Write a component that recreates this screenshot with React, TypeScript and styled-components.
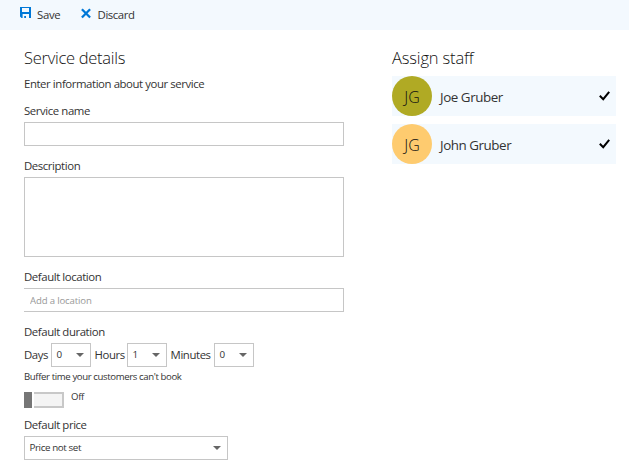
import React from 'react';
import styled, { createGlobalStyle } from 'styled-components';

const GlobalStyle = createGlobalStyle`
  *, *::before, *::after { box-sizing: border-box; }
  body {
    margin: 0;
    background: #fff;
    color: #333;
    font: 400 11.4px/16px "Open Sans", "Noto Sans", sans-serif;
    letter-spacing: -0.42px;
    white-space: nowrap;
    overflow: hidden;
  }
`;

const Page = styled.div`
  width: 629px;
  height: 470px;
`;

const Toolbar = styled.header`
  display: flex;
  height: 30px;
  padding: 7px 0 0 20px;
  background: #f3f9fe;
`;

const Command = styled.button<{ $width: number; $gap: number; $spacing: number }>`
  display: flex;
  gap: ${(p) => p.$gap}px;
  width: ${(p) => p.$width}px;
  height: 16px;
  padding: 0;
  border: 0;
  background: none;
  color: inherit;
  font: inherit;
  letter-spacing: ${(p) => p.$spacing}px;
  svg { flex: none; display: block; }
`;

const Columns = styled.main`
  display: grid;
  grid-template-columns: 320px 224px;
  column-gap: 48px;
  padding: 16px 0 0 24px;
`;

const Column = styled.section`
  display: flex;
  flex-direction: column;
`;

const Heading = styled.h1<{ $spacing: number }>`
  margin: 0;
  font-size: 16.5px;
  font-weight: 300;
  line-height: 24px;
  letter-spacing: ${(p) => p.$spacing}px;
  color: #111;
`;

const Intro = styled.p`
  margin: 6px 0 11px;
`;

const Field = styled.div<{ $after?: number }>`
  display: flex;
  flex-direction: column;
  gap: 3px;
  margin-bottom: ${(p) => p.$after ?? 12}px;
`;

const Label = styled.label`
  height: 16px;
`;

const Input = styled.input<{ $openLeft?: boolean }>`
  width: 320px;
  height: 24px;
  padding: 0 6px;
  border: 1px solid #c6c6c6;
  ${(p) => p.$openLeft && 'border-left: 0;'}
  border-radius: 0;
  outline: 0;
  background: #fff;
  font: 9.6px "Open Sans", "Noto Sans", sans-serif;
  letter-spacing: -0.15px;
  &::placeholder { color: #999; opacity: 1; }
`;

const TextArea = styled.textarea`
  display: block;
  width: 320px;
  height: 80px;
  border: 1px solid #c6c6c6;
  border-radius: 0;
  outline: 0;
  resize: none;
`;

const DurationRow = styled.div`
  display: flex;
  align-items: center;
  height: 24px;
`;

const Unit = styled.span<{ $width: number }>`
  width: ${(p) => p.$width}px;
  height: 17px;
`;

const Select = styled.div<{ $width: number }>`
  display: flex;
  align-items: center;
  justify-content: space-between;
  width: ${(p) => p.$width}px;
  height: 24px;
  margin-right: 3.6px;
  padding: 0 6px 0 4.5px;
  border: 1px solid #c6c6c6;
  font-size: 9.8px;
  letter-spacing: -0.4px;
  background: #fff;
`;

const Hint = styled.p`
  margin: 3px 0 8px;
  height: 14px;
  font-size: 9.6px;
  line-height: 14px;
  letter-spacing: -0.38px;
`;

const ToggleRow = styled.div`
  display: flex;
  gap: 7px;
  height: 16px;
  margin-bottom: 9px;
  font-size: 9.6px;
  line-height: 10px;
  letter-spacing: -0.3px;
`;

const Toggle = styled.span`
  display: flex;
  gap: 2px;
  width: 40px;
  height: 16px;
`;

const Thumb = styled.span`
  width: 8px;
  background: #767676;
`;

const Track = styled.span`
  flex: 1;
  border: 2px solid #c8c8c8;
  border-left: 0;
  background: #f4f4f4;
`;

const StaffList = styled.ul`
  display: flex;
  flex-direction: column;
  gap: 8px;
  margin: 6px 0 0;
  padding: 0;
  list-style: none;
`;

const StaffRow = styled.li`
  display: flex;
  align-items: center;
  height: 40px;
  padding-right: 6px;
  background: #f3f9fe;
`;

const Avatar = styled.span<{ $color: string }>`
  display: flex;
  align-items: center;
  justify-content: center;
  width: 40px;
  height: 40px;
  padding-top: 2px;
  border-radius: 50%;
  background: ${(p) => p.$color};
  font-size: 16px;
  font-weight: 300;
  letter-spacing: 0;
  color: #111;
`;

const StaffName = styled.span`
  flex: 1;
  padding: 2px 0 0 8px;
  font-size: 13.4px;
  letter-spacing: -0.45px;
`;

const Caret = () => (
  <svg width="8" height="4" viewBox="0 0 8 4">
    <path d="M0 0h8L4 4z" fill="#666" />
  </svg>
);

const SaveIcon = () => (
  <svg width="11" height="11" viewBox="0 0 11 11">
    <path
      fill="#0078d7"
      fillRule="evenodd"
      d="M0 0h11v11H9V7H2.6v4H1.5L0 9.5zM2 1v4h7V1zM4.2 9H6v2H4.2z"
    />
  </svg>
);

const DiscardIcon = () => (
  <svg width="11" height="13" viewBox="0 0 11 13">
    <path d="M.9 2.3l8.2 8.2M9.1 2.3L.9 10.5" stroke="#0078d7" strokeWidth="2.3" />
  </svg>
);

const CheckIcon = () => (
  <svg width="11" height="10" viewBox="0 0 11 10">
    <path d="M.8 4.8l3.4 3.4L10.2.8" fill="none" stroke="#000" strokeWidth="2" />
  </svg>
);

const staff = [
  { name: 'Joe Gruber', initials: 'JG', color: '#b0aa24' },
  { name: 'John Gruber', initials: 'JG', color: '#fecb6f' },
];

const durations = [
  { unit: 'Days', value: '0', labelWidth: 27, width: 40 },
  { unit: 'Hours', value: '1', labelWidth: 32.4, width: 40 },
  { unit: 'Minutes', value: '0', labelWidth: 43.4, width: 40 },
];

export default function App() {
  return (
    <Page>
      <GlobalStyle />
      <Toolbar>
        <Command $width={61} $gap={6} $spacing={-0.3}>
          <SaveIcon />
          Save
        </Command>
        <Command $width={60} $gap={5.6} $spacing={-0.45}>
          <DiscardIcon />
          Discard
        </Command>
      </Toolbar>
      <Columns>
        <Column>
          <Heading $spacing={-0.28}>Service details</Heading>
          <Intro>Enter information about your service</Intro>
          <Field>
            <Label htmlFor="name">Service name</Label>
            <Input id="name" />
          </Field>
          <Field>
            <Label htmlFor="description">Description</Label>
            <TextArea id="description" />
          </Field>
          <Field>
            <Label htmlFor="location">Default location</Label>
            <Input id="location" $openLeft placeholder="Add a location" />
          </Field>
          <Field $after={0}>
            <Label>Default duration</Label>
            <DurationRow>
              {durations.map((d) => (
                <React.Fragment key={d.unit}>
                  <Unit $width={d.labelWidth}>{d.unit}</Unit>
                  <Select $width={d.width}>
                    {d.value}
                    <Caret />
                  </Select>
                </React.Fragment>
              ))}
            </DurationRow>
          </Field>
          <Hint>Buffer time your customers can't book</Hint>
          <ToggleRow>
            <Toggle>
              <Thumb />
              <Track />
            </Toggle>
            Off
          </ToggleRow>
          <Field $after={0}>
            <Label>Default price</Label>
            <Select $width={204}>
              Price not set
              <Caret />
            </Select>
          </Field>
        </Column>
        <Column>
          <Heading $spacing={-0.15}>Assign staff</Heading>
          <StaffList>
            {staff.map((s) => (
              <StaffRow key={s.name}>
                <Avatar $color={s.color}>{s.initials}</Avatar>
                <StaffName>{s.name}</StaffName>
                <CheckIcon />
              </StaffRow>
            ))}
          </StaffList>
        </Column>
      </Columns>
    </Page>
  );
}
